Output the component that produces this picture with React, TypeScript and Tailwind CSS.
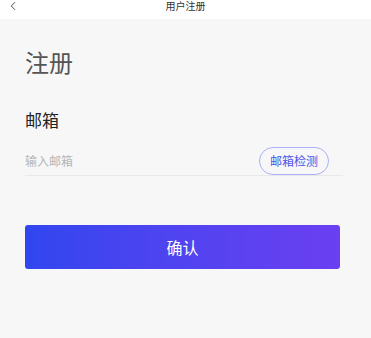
import { ChevronLeft } from "lucide-react";

const font = { fontFamily: '"Noto Sans CJK SC", "Noto Sans", sans-serif' };

export default function App() {
  return (
    <div className="w-[371px] h-[338px] bg-[#f7f7f8] flex flex-col" style={font}>
      {/* header */}
      <div className="relative h-[19px] bg-white flex items-start justify-center">
        <ChevronLeft className="absolute left-[6px] top-[-1px] w-[14px] h-[14px] text-[#333]" strokeWidth={1.5} />
        <span className="text-[10px] leading-[11px] text-[#333]">用户注册</span>
      </div>

      <div className="px-[25px] pt-[29px]">
        <h1 className="text-[24px] leading-[28px] text-[#555]">注册</h1>

        <div className="mt-[34px] text-[17px] leading-[20px] text-[#222]">邮箱</div>

        <div className="mt-[16px] mr-[3px] h-[30px] flex items-center justify-between border-b border-[#e9e9ea]">
          <input
            className="text-[12px] bg-transparent outline-none placeholder-[#b5b5b5] w-[150px]"
            placeholder="输入邮箱"
          />
          <button className="h-[28px] px-[10px] mr-[14px] rounded-full border border-[#aab1f6] text-[12px] leading-none text-[#4b56e8]">
            邮箱检测
          </button>
        </div>

        <button className="mt-[49px] w-[315px] h-[44px] rounded-[3px] bg-gradient-to-r from-[#3046ef] to-[#6a3ff1] text-white text-[16px]">
          确认
        </button>
      </div>
    </div>
  );
}
